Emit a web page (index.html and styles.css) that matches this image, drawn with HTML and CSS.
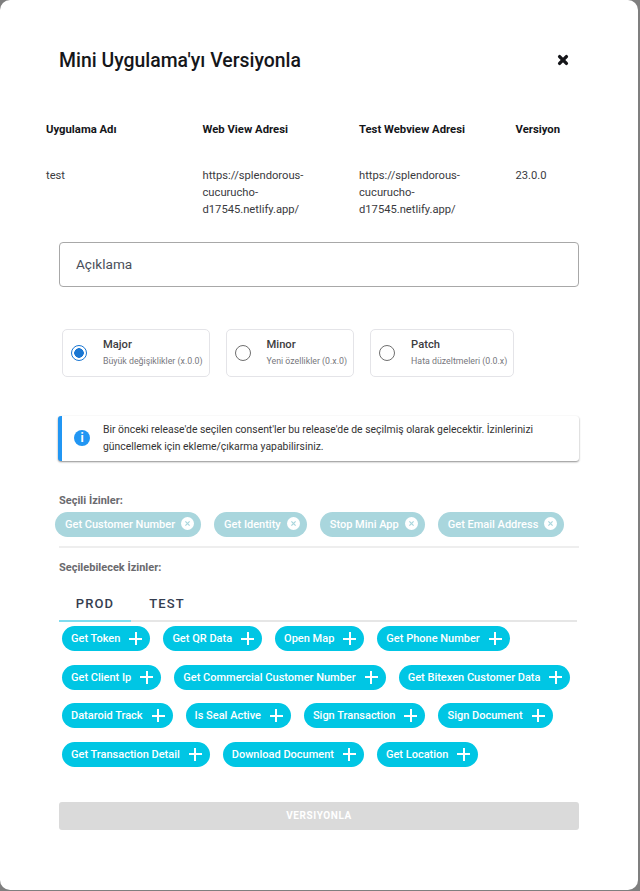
FILE: index.html
```html
<!DOCTYPE html>
<html lang="tr">
<head>
    <meta charset="UTF-8">
    <title>Mini Uygulama'yı Versiyonla</title>
    <link rel="stylesheet" href="styles.css">
</head>
<body>
    <div class="modal">
        <div class="modal-head">
            <h1>Mini Uygulama'yı Versiyonla</h1>
            <svg class="close" viewBox="0 0 12 12" width="12" height="12"><path d="M2.6 2.6l6.8 6.8M9.4 2.6l-6.8 6.8" stroke="#15161a" stroke-width="3.4" stroke-linecap="round"/></svg>
        </div>
        <div class="info-table">
            <div class="th">Uygulama Adı</div>
            <div class="th">Web View Adresi</div>
            <div class="th">Test Webview Adresi</div>
            <div class="th">Versiyon</div>
            <div class="td">test</div>
            <div class="td">https://splendorous-cucurucho-d17545.netlify.app/</div>
            <div class="td">https://splendorous-cucurucho-d17545.netlify.app/</div>
            <div class="td">23.0.0</div>
        </div>
        <div class="form">
            <div class="input">Açıklama</div>
            <div class="radios">
                <div class="radio-card">
                    <span class="radio checked"></span>
                    <div class="radio-text"><b>Major</b><small>Büyük değişiklikler (x.0.0)</small></div>
                </div>
                <div class="radio-card">
                    <span class="radio"></span>
                    <div class="radio-text"><b>Minor</b><small>Yeni özellikler (0.x.0)</small></div>
                </div>
                <div class="radio-card">
                    <span class="radio"></span>
                    <div class="radio-text"><b>Patch</b><small>Hata düzeltmeleri (0.0.x)</small></div>
                </div>
            </div>
            <div class="alert">
                <span class="alert-icon">i</span>
                <p>Bir önceki release'de seçilen consent'ler bu release'de de seçilmiş olarak gelecektir. İzinlerinizi güncellemek için ekleme/çıkarma yapabilirsiniz.</p>
            </div>
            <div class="label">Seçili İzinler:</div>
            <div class="chips selected">
                <span class="chip">Get Customer Number<svg viewBox="0 0 13 13" width="13" height="13"><circle cx="6.5" cy="6.5" r="6.5" fill="#fff"/><path d="M4.4 4.4l4.2 4.2M8.6 4.4l-4.2 4.2" stroke="#a9d6dd" stroke-width="1.2"/></svg></span>
                <span class="chip">Get Identity<svg viewBox="0 0 13 13" width="13" height="13"><circle cx="6.5" cy="6.5" r="6.5" fill="#fff"/><path d="M4.4 4.4l4.2 4.2M8.6 4.4l-4.2 4.2" stroke="#a9d6dd" stroke-width="1.2"/></svg></span>
                <span class="chip">Stop Mini App<svg viewBox="0 0 13 13" width="13" height="13"><circle cx="6.5" cy="6.5" r="6.5" fill="#fff"/><path d="M4.4 4.4l4.2 4.2M8.6 4.4l-4.2 4.2" stroke="#a9d6dd" stroke-width="1.2"/></svg></span>
                <span class="chip">Get Email Address<svg viewBox="0 0 13 13" width="13" height="13"><circle cx="6.5" cy="6.5" r="6.5" fill="#fff"/><path d="M4.4 4.4l4.2 4.2M8.6 4.4l-4.2 4.2" stroke="#a9d6dd" stroke-width="1.2"/></svg></span>
            </div>
            <hr class="divider">
            <div class="label">Seçilebilecek İzinler:</div>
            <div class="tabs">
                <span class="tab active">PROD</span>
                <span class="tab">TEST</span>
            </div>
            <div class="chips available">
                <span class="chip">Get Token<i class="plus"></i></span>
                <span class="chip">Get QR Data<i class="plus"></i></span>
                <span class="chip">Open Map<i class="plus"></i></span>
                <span class="chip">Get Phone Number<i class="plus"></i></span>
                <span class="chip">Get Client Ip<i class="plus"></i></span>
                <span class="chip">Get Commercial Customer Number<i class="plus"></i></span>
                <span class="chip">Get Bitexen Customer Data<i class="plus"></i></span>
                <span class="chip">Dataroid Track<i class="plus"></i></span>
                <span class="chip">Is Seal Active<i class="plus"></i></span>
                <span class="chip">Sign Transaction<i class="plus"></i></span>
                <span class="chip">Sign Document<i class="plus"></i></span>
                <span class="chip">Get Transaction Detail<i class="plus"></i></span>
                <span class="chip">Download Document<i class="plus"></i></span>
                <span class="chip">Get Location<i class="plus"></i></span>
            </div>
            <div class="submit">VERSIYONLA</div>
        </div>
    </div>
</body>
</html>
```

FILE: styles.css
```css
* { box-sizing: border-box; }
html, body { height: 100%; }
body {
    margin: 0;
    background: #7f7f7f;
    font-family: Roboto, "Liberation Sans", sans-serif;
    overflow: hidden;
}
.modal {
    width: 638px;
    height: 890px;
    background: #fff;
    border-radius: 10px;
}
.modal-head {
    display: flex;
    justify-content: space-between;
    align-items: center;
    padding: 48px 69px 0 59px;
    height: 74px;
}
.modal-head h1 {
    margin: 0;
    font-size: 19.4px;
    line-height: 26px;
    font-weight: 500;
    color: #15161a;
}
.close { display: block; margin-top: -2px; }
.info-table {
    display: grid;
    grid-template-columns: 156.5px 156.5px 156.5px 110px;
    padding: 47px 0 0 46px;
    color: #3a3a3e;
}
.th {
    font-size: 11.3px;
    line-height: 18px;
    font-weight: 700;
    color: #15161a;
    padding-bottom: 28px;
}
.td {
    font-size: 11.2px;
    line-height: 17px;
    font-weight: 400;
    padding-right: 30px;
    overflow-wrap: break-word;
}
.form { padding: 0 59px; }
.input {
    width: 520px;
    height: 45px;
    margin-top: 24px;
    padding-left: 16px;
    border: 1px solid #a8a8a8;
    border-radius: 4px;
    font-size: 13.6px;
    line-height: 42px;
    color: #4a4f5a;
}
.radios {
    display: flex;
    gap: 16px;
    margin: 42px 0 0 3px;
}
.radio-card {
    display: flex;
    align-items: center;
    height: 48px;
    padding: 0 6px 0 8px;
    border: 1px solid #e4e4e8;
    border-radius: 5px;
    gap: 16px;
}
.radio-text { padding-bottom: 2px; }
.radio-card b {
    display: block;
    font-size: 11.2px;
    line-height: 15px;
    font-weight: 500;
    color: #3c3c40;
}
.radio-card small {
    display: block;
    margin-top: 3px;
    font-size: 8.8px;
    line-height: 13px;
    color: #77777d;
}
.radio {
    display: block;
    width: 16px;
    height: 16px;
    flex: none;
    border: 1.5px solid #6f6f6f;
    border-radius: 50%;
}
.radio.checked {
    border-color: #1976d2;
    background: radial-gradient(circle, #1976d2 0 4.5px, #fff 5px);
}
.alert {
    display: flex;
    align-items: center;
    gap: 13px;
    width: 521px;
    height: 45px;
    margin: 39px 0 0 -1px;
    padding: 0 0 1px 12px;
    border-left: 4px solid #2196f3;
    border-radius: 3px;
    background: #fff;
    box-shadow: 0 1px 2px rgba(0, 0, 0, 0.45);
}
.alert p {
    margin: 0;
    font-size: 10.4px;
    line-height: 17px;
    color: #333;
    padding-right: 30px;
}
.alert-icon {
    display: block;
    width: 16px;
    height: 16px;
    flex: none;
    border-radius: 50%;
    background: #2196f3;
    color: #fff;
    font-size: 12px;
    font-weight: 700;
    line-height: 16px;
    text-align: center;
}
.label {
    font-size: 11px;
    line-height: 14px;
    font-weight: 700;
    color: #6a6a6e;
}
.alert + .label { margin-top: 33px; }
.chips {
    display: flex;
    flex-wrap: wrap;
    column-gap: 13px;
}
.chip {
    display: inline-flex;
    align-items: center;
    height: 25px;
    border-radius: 13px;
    color: #fff;
    font-size: 11px;
    font-weight: 500;
    white-space: nowrap;
}
.selected { margin: 4px 0 0 -4px; }
.selected .chip {
    background: #a9d6dd;
    padding: 0 7px 0 10px;
    gap: 6px;
}
.selected .chip svg { margin-top: -2px; }
.divider {
    height: 2px;
    margin: 9px 0 0;
    border: 0;
    background: #eee;
}
.divider + .label { margin-top: 13px; }
.tabs {
    display: flex;
    width: 518px;
    height: 40px;
    margin-top: 7px;
    border-bottom: 2px solid #e6e6e6;
}
.tab {
    width: 72px;
    padding-top: 14px;
    font-size: 13px;
    line-height: 16px;
    font-weight: 500;
    letter-spacing: 1.1px;
    color: #353d50;
    text-align: center;
}
.tab.active {
    height: 40px;
    border-bottom: 2px solid #7fdcef;
}
.available {
    margin: 4px 0 0 3px;
    row-gap: 13.5px;
    column-gap: 13px;
}
.available .chip {
    background: #00c6e4;
    padding: 0 8px 0 9px;
    gap: 9px;
}
.plus {
    display: block;
    width: 13px;
    height: 13px;
    background: linear-gradient(#fff, #fff) center / 13px 2px no-repeat, linear-gradient(#fff, #fff) center / 2px 13px no-repeat;
}
.submit {
    height: 28px;
    margin-top: 35px;
    border-radius: 3px;
    background: #dadada;
    color: #fff;
    font-size: 10px;
    font-weight: 700;
    letter-spacing: 0.6px;
    line-height: 28px;
    text-align: center;
}
```
